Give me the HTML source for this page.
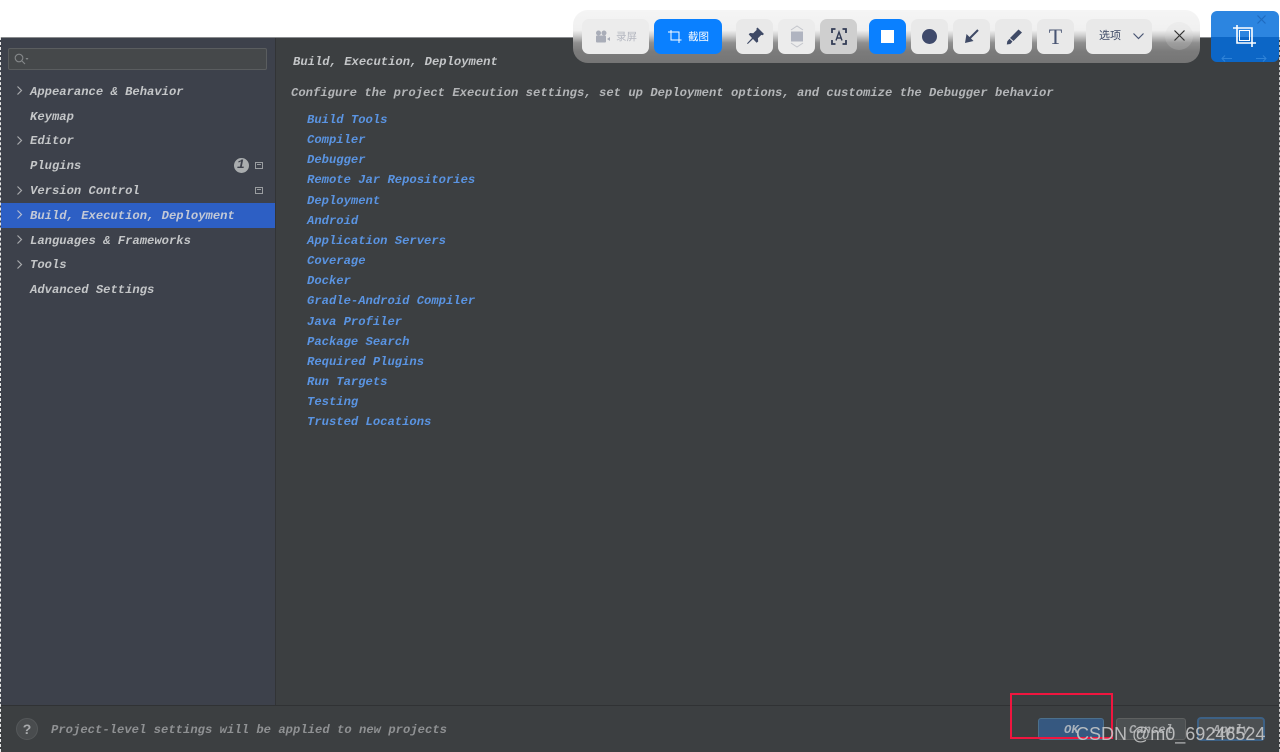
<!DOCTYPE html>
<html><head><meta charset="utf-8">
<style>
html,body{margin:0;padding:0;width:1280px;height:752px;overflow:hidden;background:#fff}
#w{position:absolute;left:0;top:0;width:1280px;height:752px;overflow:hidden;filter:blur(.35px)}
*{box-sizing:border-box}
.a{position:absolute}
.t{position:absolute;font-family:"Liberation Mono",monospace;font-weight:bold;font-style:italic;font-size:12.2px;line-height:16px;white-space:pre;height:16px}
.s{color:#c4c6c8;left:30px;margin-top:1px}
.l{color:#5a94e2;left:307px;margin-top:1px}
.b{position:absolute;top:19px;height:35px;border-radius:7px;background:#e9e9e9}
svg{position:absolute;display:block;overflow:visible}
</style></head>
<body>
<div id="w">
<div class="a" style="left:0;top:37px;width:1280px;height:715px;background:#3c3f41"></div>
<div class="a" style="left:0;top:37px;width:1280px;height:1px;background:#8a8c8e"></div>
<div class="a" style="left:0;top:38px;width:275px;height:667px;background:#3d414b"></div>
<div class="a" style="left:275px;top:38px;width:1px;height:667px;background:#323436"></div>
<div class="a" style="left:0;top:705px;width:1280px;height:1px;background:#303234"></div>
<div class="a" style="left:0;top:37px;width:1px;height:715px;border-left:1px dashed #e8e8e8"></div>
<div class="a" style="left:1279px;top:37px;width:1px;height:715px;border-left:1px dashed #c8c8c8"></div>

<!-- search -->
<div class="a" style="left:8px;top:48px;width:259px;height:22px;background:#45484a;border:1px solid #5a5d5f;border-radius:2px"></div>
<svg style="left:14px;top:53px" width="16" height="12" viewBox="0 0 16 12"><circle cx="5" cy="5" r="3.8" fill="none" stroke="#85888a" stroke-width="1.1"/><path d="M8 8l3 3" stroke="#85888a" stroke-width="1.1"/><path d="M11.5 5h3l-1.5 2z" fill="#85888a"/></svg>

<!-- selection -->
<div class="a" style="left:1px;top:203px;width:274px;height:25px;background:#2d5fc4"></div>

<svg style="left:16px;top:86px" width="7" height="9"><path d="M1.5 .5L5.5 4.5 1.5 8.5" fill="none" stroke="#a8aaad" stroke-width="1.2"/></svg>
<svg style="left:16px;top:136px" width="7" height="9"><path d="M1.5 .5L5.5 4.5 1.5 8.5" fill="none" stroke="#a8aaad" stroke-width="1.2"/></svg>
<svg style="left:16px;top:186px" width="7" height="9"><path d="M1.5 .5L5.5 4.5 1.5 8.5" fill="none" stroke="#a8aaad" stroke-width="1.2"/></svg>
<svg style="left:16px;top:210px" width="7" height="9"><path d="M1.5 .5L5.5 4.5 1.5 8.5" fill="none" stroke="#b4bcd0" stroke-width="1.2"/></svg>
<svg style="left:16px;top:235px" width="7" height="9"><path d="M1.5 .5L5.5 4.5 1.5 8.5" fill="none" stroke="#a8aaad" stroke-width="1.2"/></svg>
<svg style="left:16px;top:260px" width="7" height="9"><path d="M1.5 .5L5.5 4.5 1.5 8.5" fill="none" stroke="#a8aaad" stroke-width="1.2"/></svg>

<div class="t s" style="top:83px">Appearance &amp; Behavior</div>
<div class="t s" style="top:108px">Keymap</div>
<div class="t s" style="top:133px;margin-top:0">Editor</div>
<div class="t s" style="top:157px">Plugins</div>
<div class="t s" style="top:182px">Version Control</div>
<div class="t s" style="top:207px;color:#c3c9d6">Build, Execution, Deployment</div>
<div class="t s" style="top:232px">Languages &amp; Frameworks</div>
<div class="t s" style="top:256px">Tools</div>
<div class="t s" style="top:281px">Advanced Settings</div>

<div class="a" style="left:234px;top:158px;width:15px;height:15px;border-radius:50%;background:#a9acae"></div>
<div class="t" style="left:237px;top:157px;color:#3d404b;font-size:13px">1</div>
<div class="a" style="left:255px;top:162px;width:8px;height:7px;border:1px solid #9a9da0;background:#3d414b"><div style="margin:1px;height:1px;background:#9a9da0"></div></div>
<div class="a" style="left:255px;top:187px;width:8px;height:7px;border:1px solid #9a9da0;background:#3d414b"><div style="margin:1px;height:1px;background:#9a9da0"></div></div>

<!-- right content -->
<div class="t" style="left:293px;top:54px;color:#c4c6c8">Build, Execution, Deployment</div>
<div class="t" style="left:291px;top:85px;color:#b4b6b8;letter-spacing:.02px">Configure the project Execution settings, set up Deployment options, and customize the Debugger behavior</div>
<div class="t l" style="top:111px">Build Tools</div>
<div class="t l" style="top:131px">Compiler</div>
<div class="t l" style="top:151px">Debugger</div>
<div class="t l" style="top:171px">Remote Jar Repositories</div>
<div class="t l" style="top:192px">Deployment</div>
<div class="t l" style="top:212px">Android</div>
<div class="t l" style="top:232px">Application Servers</div>
<div class="t l" style="top:252px">Coverage</div>
<div class="t l" style="top:272px">Docker</div>
<div class="t l" style="top:292px">Gradle-Android Compiler</div>
<div class="t l" style="top:313px">Java Profiler</div>
<div class="t l" style="top:333px">Package Search</div>
<div class="t l" style="top:353px">Required Plugins</div>
<div class="t l" style="top:373px">Run Targets</div>
<div class="t l" style="top:393px">Testing</div>
<div class="t l" style="top:413px">Trusted Locations</div>

<!-- bottom bar -->
<div class="a" style="left:16px;top:718px;width:22px;height:22px;border-radius:50%;background:#494c4e;border:1px solid #55585a"></div>
<div class="a" style="left:16px;top:718px;width:22px;height:22px;text-align:center;font:bold 14px/22px 'Liberation Sans',sans-serif;color:#a8aaac">?</div>
<div class="t" style="left:51px;top:722px;margin-top:0;color:#8f9193;letter-spacing:.02px">Project-level settings will be applied to new projects</div>

<div class="a" style="left:1038px;top:718px;width:66px;height:22px;background:#365880;border-radius:3px;border:1px solid #4c708c"></div>
<div class="t" style="left:1064px;top:722px;color:#a9b2bc">OK</div>
<div class="a" style="left:1116px;top:718px;width:70px;height:22px;background:#4c5052;border-radius:3px;border:1px solid #5e6060"></div>
<div class="t" style="left:1129px;top:722px;color:#a8aaac">Cancel</div>
<div class="a" style="left:1197px;top:717px;width:68px;height:24px;background:#4c5052;border-radius:4px;border:2px solid #3d6185"></div>
<div class="t" style="left:1213px;top:722px;color:#a8aaac">Apply</div>

<div class="a" style="left:1010px;top:693px;width:103px;height:46px;border:2px solid #f0163f"></div>
<div class="a" style="left:1076px;top:723px;font:18px/22px 'Liberation Sans',sans-serif;color:#c6c7c8;white-space:pre;opacity:.9">CSDN @m0_69246524</div>

<!-- toolbar -->
<div class="a" style="left:573px;top:10px;width:627px;height:53px;border-radius:15px;background:linear-gradient(to bottom,#f5f5f5 0,#f0f0f0 38%,#cfcfcf 48%,#8f8f8f 62%,#7b7b7b 78%,#757575 100%)"></div>

<div class="b" style="left:582px;width:67px;background:#ececec"></div>
<svg style="left:595px;top:30px" width="16" height="13" viewBox="0 0 16 13"><circle cx="3.5" cy="3" r="2.5" fill="#a9adb8"/><circle cx="9" cy="3" r="2.5" fill="#a9adb8"/><rect x="1" y="5.5" width="10" height="7" rx="1" fill="#a9adb8"/><path d="M12 9l3-2v4z" fill="#a9adb8"/></svg>
<div class="a" style="left:616px;top:30px;font:10.5px/14px 'Liberation Sans','Noto Sans CJK SC',sans-serif;color:#b4b7c0">录屏</div>

<div class="b" style="left:654px;width:68px;background:#0a80ff"></div>
<svg style="left:668px;top:30px" width="14" height="14" viewBox="0 0 14 14" fill="none" stroke="#fff" stroke-width="1"><path d="M0 2h3v-2M3 2h8v8M3 2v8h8M11 10h2.5M11 10v3"/></svg>
<div class="a" style="left:688px;top:30px;font:10.5px/14px 'Liberation Sans','Noto Sans CJK SC',sans-serif;color:#fff">截图</div>

<div class="b" style="left:736px;width:37px"></div>
<svg style="left:746px;top:27px" width="19" height="19" viewBox="0 0 19 19"><path d="M11.5 .5L18 7l-1.5 1.2-1.2-.3-3.4 3.4.3 3.2-1.6 1.3L7 12 1.8 17l-.8-.6L6 11 2.7 7.4 4 6l3.2.3 3.5-3.4-.4-1.2z" fill="#3f4a66"/></svg>

<div class="b" style="left:778px;width:37px;background:#ececec"></div>
<svg style="left:790px;top:25px" width="14" height="23" viewBox="0 0 14 23"><path d="M1 5L7 1l6 4M1 18l6 4 6-4" fill="none" stroke="#c4c6cc" stroke-width="1"/><rect x="1" y="6.5" width="12" height="10" fill="#b0b4c0"/></svg>

<div class="b" style="left:820px;width:37px;background:#cfcfcf"></div>
<svg style="left:831px;top:28px" width="16" height="17" viewBox="0 0 16 17" fill="none" stroke="#333c55" stroke-width="1.8"><path d="M1 5V1h3.5M11.500 1H15v4M1 12v4h3.500M11.500 16H15v-4"/><path d="M5 12.500L8 4l3 8.500M6 10h4" stroke-width="1.4"/></svg>

<div class="b" style="left:869px;width:37px;background:#0a80ff"></div>
<div class="a" style="left:881px;top:30px;width:13px;height:13px;background:#fff"></div>

<div class="b" style="left:911px;width:37px"></div>
<div class="a" style="left:922px;top:29px;width:15px;height:15px;border-radius:50%;background:#3f4a6b"></div>

<div class="b" style="left:953px;width:37px"></div>
<svg style="left:964px;top:29px" width="15" height="15" viewBox="0 0 15 15"><path d="M14 1L5 10" stroke="#3f4a66" stroke-width="2"/><path d="M1 14l1.500-9 7 7z" fill="#3f4a66"/></svg>

<div class="b" style="left:995px;width:37px"></div>
<svg style="left:1006px;top:29px" width="17" height="16" viewBox="0 0 17 16"><path d="M12.500 .5l3.500 3-8.500 8.500-3.500-3z" fill="#3f4a66"/><path d="M3.500 9.800l3 2.800-2.200 2.400-3.500.5.5-3.300z" fill="#3f4a66"/></svg>

<div class="b" style="left:1037px;width:37px"></div>
<div class="a" style="left:1037px;top:24px;width:37px;text-align:center;font:22px/26px 'Liberation Serif',serif;color:#4a5674">T</div>

<div class="b" style="left:1086px;width:66px"></div>
<div class="a" style="left:1099px;top:29px;font:11px/15px 'Liberation Sans','Noto Sans CJK SC',sans-serif;color:#3f4a66">选项</div>
<svg style="left:1133px;top:33px" width="11" height="7" viewBox="0 0 11 7"><path d="M.5 .5l5 5 5-5" fill="none" stroke="#4a5674" stroke-width="1.200"/></svg>

<div class="a" style="left:1165px;top:22px;width:28px;height:28px;border-radius:50%;background:rgba(215,215,215,.22)"></div>
<svg style="left:1174px;top:30px" width="11" height="11" viewBox="0 0 11 11"><path d="M.5 .5l10 10M10.500 .5l-10 10" stroke="#303030" stroke-width="1.200"/></svg>

<!-- crop button -->
<div class="a" style="left:1211px;top:11px;width:68px;height:51px;border-radius:6px;overflow:hidden;background:linear-gradient(to bottom,#2c85e0 0,#2c85e0 51%,#0c66c6 51%,#0c66c6 100%)"></div>
<svg style="left:1233px;top:25px" width="24" height="22" viewBox="0 0 24 22" fill="none" stroke="#fff" stroke-width="1.600"><path d="M0 3h4V0M4 3h15v15M4 3v15h19M19 18v4"/><rect x="6.500" y="5.500" width="10" height="10" stroke-width="1"/></svg>
<svg style="left:1257px;top:15px" width="9" height="9"><path d="M.5 .5l8 8M8.500 .5l-8 8" stroke="#1f6cc0" stroke-width="1.200"/></svg>
<svg style="left:1221px;top:55px" width="45" height="7" viewBox="0 0 45 7" fill="none" stroke="#2f83d8" stroke-width="1"><path d="M1 3.500h10M4 .5L1 3.500l3 3M35 3.500h10M42 .5l3 3-3 3"/></svg>
</div>
</body></html>
